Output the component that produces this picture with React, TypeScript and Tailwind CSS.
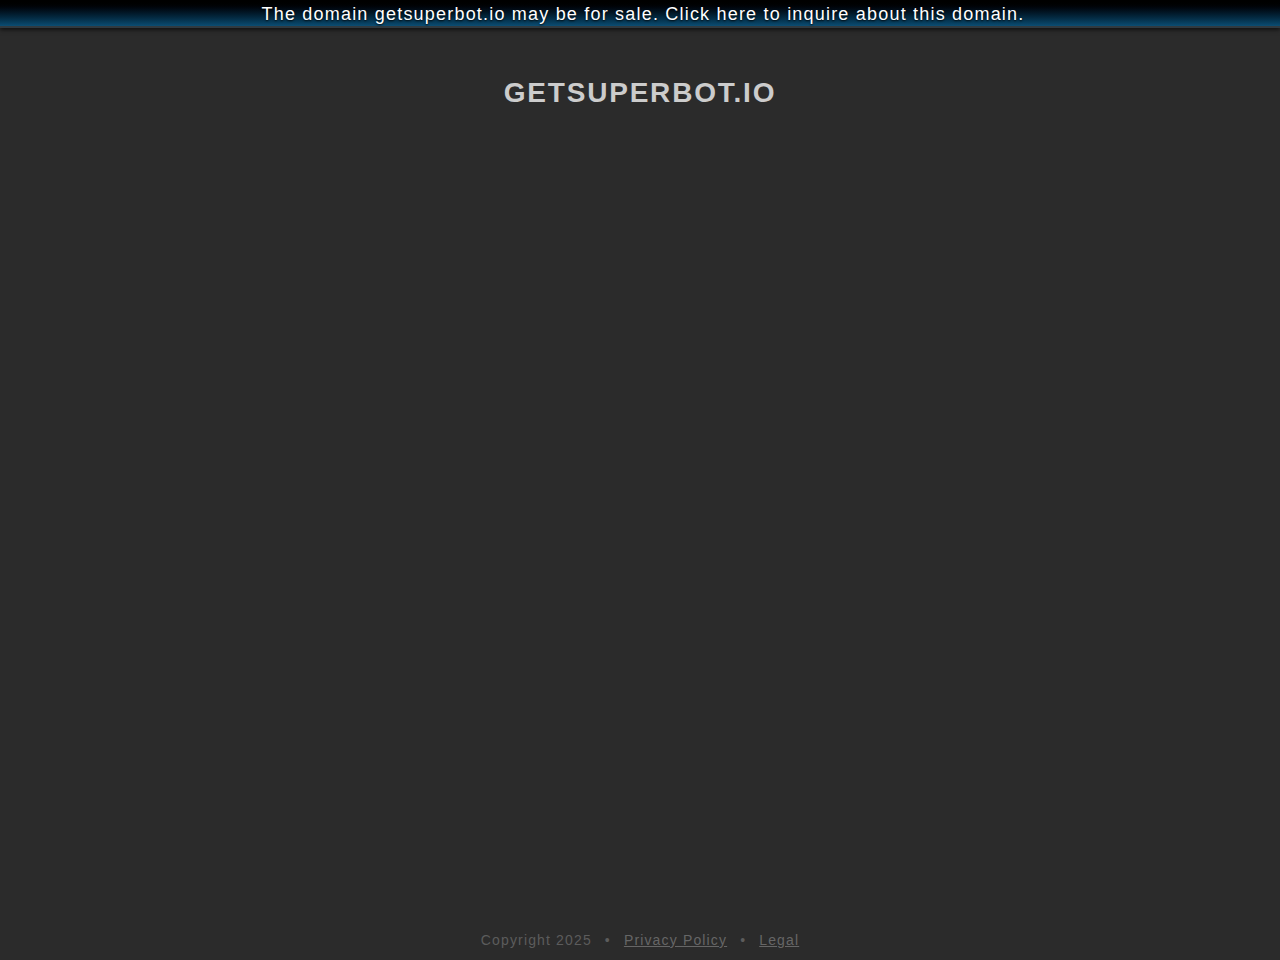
export default function App() {
  return (
    <div className="min-h-screen flex flex-col bg-[#2b2b2b] font-['Liberation_Sans',Arial,sans-serif]">
      <a
        href="#"
        className="block h-[28px] pl-[6px] bg-gradient-to-b from-[#000000] to-[#0b4d73] text-center text-[18px] leading-[28px] tracking-[1.2px] text-white [text-shadow:0_1px_2px_rgba(0,0,0,0.9)] shadow-[0_2px_4px_rgba(0,0,0,0.6)] border-b-2 border-[#303a40]"
      >
        The domain getsuperbot.io may be for sale. Click here to inquire about this domain.
      </a>

      <h1 className="mt-[47px] text-center text-[28px] leading-[36px] font-bold tracking-[1.8px] text-[#cccccc]">
        GETSUPERBOT.IO
      </h1>

      <div className="flex-1" />

      <footer className="pb-[12px] text-center text-[14px] leading-[16px] tracking-[1.15px] text-[#5c5c5c]">
        Copyright 2025
        <span className="mx-[13px]">•</span>
        <a href="#" className="underline text-[#666666]">Privacy Policy</a>
        <span className="mx-[13px]">•</span>
        <a href="#" className="underline text-[#666666]">Legal</a>
      </footer>
    </div>
  )
}
